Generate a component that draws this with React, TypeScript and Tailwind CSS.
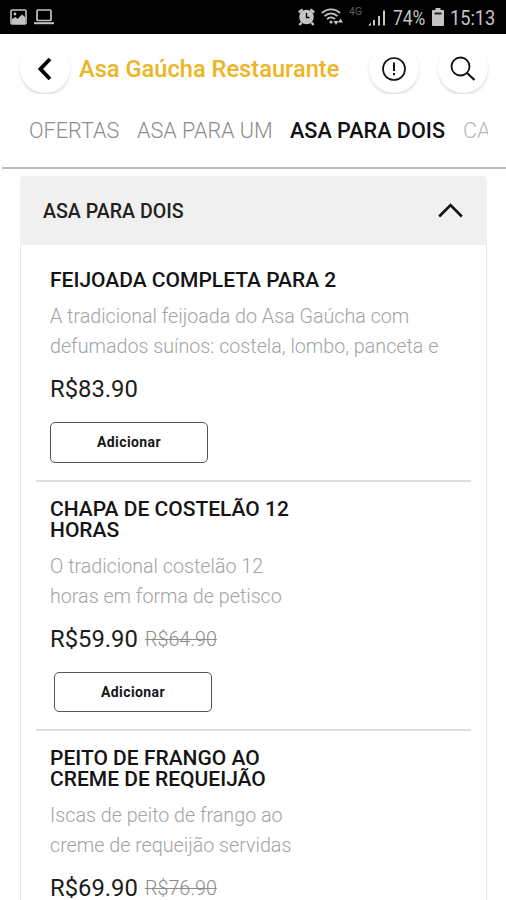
import React from "react";

type Item = {
  title: string[];
  description: string[];
  price: string;
  oldPrice?: string;
};

const items: Item[] = [
  {
    title: ["FEIJOADA COMPLETA PARA 2"],
    description: ["A tradicional feijoada do Asa Gaúcha com", "defumados suínos: costela, lombo, panceta e"],
    price: "R$83.90",
  },
  {
    title: ["CHAPA DE COSTELÃO 12", "HORAS"],
    description: ["O tradicional costelão 12", "horas em forma de petisco"],
    price: "R$59.90",
    oldPrice: "R$64.90",
  },
  {
    title: ["PEITO DE FRANGO AO", "CREME DE REQUEIJÃO"],
    description: ["Iscas de peito de frango ao", "creme de requeijão servidas"],
    price: "R$69.90",
    oldPrice: "R$76.90",
  },
];

function StatusBar() {
  return (
    <div className="flex h-[34px] shrink-0 items-center bg-black pr-[10px] pl-[10px] text-[#c4c4c4]">
      <svg width="17" height="16" viewBox="0 0 17 16">
        <rect x="1" y="1" width="15" height="14" rx="1" fill="none" stroke="currentColor" strokeWidth="1.6" />
        <circle cx="5" cy="5" r="1.4" fill="currentColor" />
        <path d="M2 10l3.500-2 2 2 4.500-4.500 3 2.500V15H2z" fill="currentColor" />
      </svg>
      <svg width="20" height="16" viewBox="0 0 20 16" className="ml-[7px]">
        <rect x="3" y="1" width="14" height="10.500" rx="1" fill="none" stroke="currentColor" strokeWidth="1.700" />
        <path d="M0 13.200h20v2H0z" fill="currentColor" />
      </svg>
      <div className="flex-1" />
      <svg width="17" height="18" viewBox="0 0 17 18">
        <circle cx="8.500" cy="9" r="7.300" fill="currentColor" />
        <path d="M.8 4.500L4.500 1.300M16.200 4.500L12.500 1.300M3.500 14.500L1.500 17M13.500 14.500L15.500 17" stroke="currentColor" strokeWidth="2.400" />
        <path d="M8.500 5v4.500h3" fill="none" stroke="#000" strokeWidth="1.300" />
      </svg>
      <svg width="23" height="18" viewBox="0 0 23 18" className="ml-[6px]" fill="none" stroke="currentColor" strokeWidth="1.800">
        <path d="M1 5.200C6 .2 14 .2 19 5.200M3.500 8.200c4-3.700 9-3.700 13 0M6 11.200c2.500-2.300 5.500-2.300 8 0" />
        <circle cx="10" cy="14" r="1.600" fill="currentColor" stroke="none" />
        <path d="M12.500 13h5L15 17zM17 14.500h5L19.500 10.500z" fill="currentColor" stroke="none" />
      </svg>
      <span className="mb-[9px] ml-[5px] w-[14px] text-[10.500px] leading-none text-[#606060]">4G</span>
      <svg width="18" height="17" viewBox="0 0 18 17" className="mt-[2px] ml-[5px]" fill="currentColor">
        <path d="M0 15.500L3 12.500V15.500zM5 10h2v5.500H5zM10 6h2v9.500h-2zM15 .5h2v15h-2z" />
      </svg>
      <span className="mt-[2px] ml-[7px] w-[33px] origin-left scale-x-[0.87] text-[20px] leading-none whitespace-nowrap">74%</span>
      <svg width="12" height="18" viewBox="0 0 12 18" className="ml-[6px]" fill="currentColor">
        <path d="M3.500 0h5v2H11a1 1 0 0 1 1 1v14a1 1 0 0 1-1 1H1a1 1 0 0 1-1-1V3a1 1 0 0 1 1-1h2.500z" />
        <path d="M2.500 4.500h7v2h-7z" fill="#222" />
      </svg>
      <span className="mt-[2px] ml-[6px] w-[46px] origin-left scale-x-[0.91] text-[20px] leading-none whitespace-nowrap">15:13</span>
    </div>
  );
}

function RoundButton({ label, children }: { label: string; children: React.ReactNode }) {
  return (
    <button
      aria-label={label}
      className="flex size-[50px] shrink-0 items-center justify-center rounded-full bg-white shadow-[0_2px_3px_rgba(0,0,0,0.14)]"
    >
      {children}
    </button>
  );
}

function Header() {
  return (
    <div className="flex h-[60px] shrink-0 items-end overflow-hidden pr-[18px] pb-px pl-5">
      <RoundButton label="Voltar">
        <svg width="14" height="24" viewBox="0 0 14 24" fill="none" stroke="#000" strokeWidth="3.800" className="mt-[2px]">
          <path d="M12 2L2.500 12L12 22" />
        </svg>
      </RoundButton>
      <h1 className="ml-[9px] flex h-[50px] flex-1 items-center pt-[3px] text-[23.650px] font-medium whitespace-nowrap text-[#eeb422]">
        Asa Gaúcha Restaurante
      </h1>
      <RoundButton label="Informações">
        <svg width="24" height="24" viewBox="0 0 24 24" fill="none" stroke="#111" strokeWidth="1.700" className="mt-px mr-px">
          <circle cx="12" cy="12" r="11" />
          <path d="M12 5.500v8.500M12 16v2.300" strokeWidth="2" />
        </svg>
      </RoundButton>
      <div className="w-[19px]" />
      <RoundButton label="Buscar">
        <svg width="26" height="26" viewBox="0 0 26 26" fill="none" stroke="#111" strokeWidth="1.800" className="mt-px mr-px">
          <circle cx="10.500" cy="10.500" r="9" />
          <path d="M17 17L24.500 24" strokeWidth="2.200" />
        </svg>
      </RoundButton>
    </div>
  );
}

function Tabs() {
  return (
    <nav className="ml-[2px] flex h-[75px] shrink-0 items-center overflow-hidden border-b-2 border-[#bdbdbd] pt-[2px] pr-[18px] pl-[27px] text-[21.600px] font-light whitespace-nowrap text-[#8d8d8d]">
      <span className="w-[108px] shrink-0">OFERTAS</span>
      <span className="w-[153px] shrink-0">ASA PARA UM</span>
      <span className="w-[173px] shrink-0 font-medium text-[#111]">ASA PARA DOIS</span>
      <span className="w-[25px] shrink-0 overflow-hidden text-[#b8b8b8]">CA</span>
    </nav>
  );
}

function MenuItem({ item, last }: { item: Item; last: boolean }) {
  return (
    <article
      className={
        "mx-[15px] pb-[17px] pl-[14px] " +
        (item.title.length === 1 ? "pt-[25px] " : "pt-[17px] ") +
        (last ? "" : "border-b-2 border-[#dedede]")
      }
    >
      <h3 className="text-[21px] leading-[21px] font-medium whitespace-nowrap text-[#141414]">
        {item.title.map((line) => (
          <span key={line} className="block">
            {line}
          </span>
        ))}
      </h3>
      <p className="mt-[11px] text-[19.700px] leading-[29.500px] font-light whitespace-nowrap text-[#a3a3a3]">
        {item.description.map((line) => (
          <span key={line} className="block">
            {line}
          </span>
        ))}
      </p>
      <div className="mt-[14px] flex h-7 items-center text-[23.800px] leading-7 text-[#1c1c1c]">
        <span className="w-[95px]">{item.price}</span>
        {item.oldPrice && (
          <span className="pt-[2px] text-[19.700px] font-light text-[#8c8c8c] line-through">{item.oldPrice}</span>
        )}
      </div>
      <button
        className={
          "block w-[158px] rounded-[5px] border border-[#555] text-[14px] font-bold tracking-[0.4px] text-[#161616] " +
          (item.oldPrice ? "mt-[19px] ml-1 h-10" : "mt-[19px] h-[41px]")
        }
      >
        Adicionar
      </button>
    </article>
  );
}

export default function App() {
  return (
    <div className="flex h-[900px] w-[506px] flex-col overflow-hidden bg-white font-[Roboto,sans-serif]">
      <StatusBar />
      <Header />
      <Tabs />
      <section className="mt-[7px] mr-[19px] ml-[20px] shrink-0">
        <div className="flex h-[69px] items-center justify-between rounded-t-[4px] bg-[#f0f0f0] pr-6 pl-[23px]">
          <h2 className="pt-[2px] text-[19.600px] font-medium text-[#222]">ASA PARA DOIS</h2>
          <svg width="25" height="15" viewBox="0 0 25 15" fill="none" stroke="#111" strokeWidth="2.600">
            <path d="M1.200 13.500L12.500 2L23.800 13.500" />
          </svg>
        </div>
        <div className="border-x border-[#e6e6e6]">
          {items.map((item, i) => (
            <MenuItem key={item.price} item={item} last={i === items.length - 1} />
          ))}
        </div>
      </section>
    </div>
  );
}
